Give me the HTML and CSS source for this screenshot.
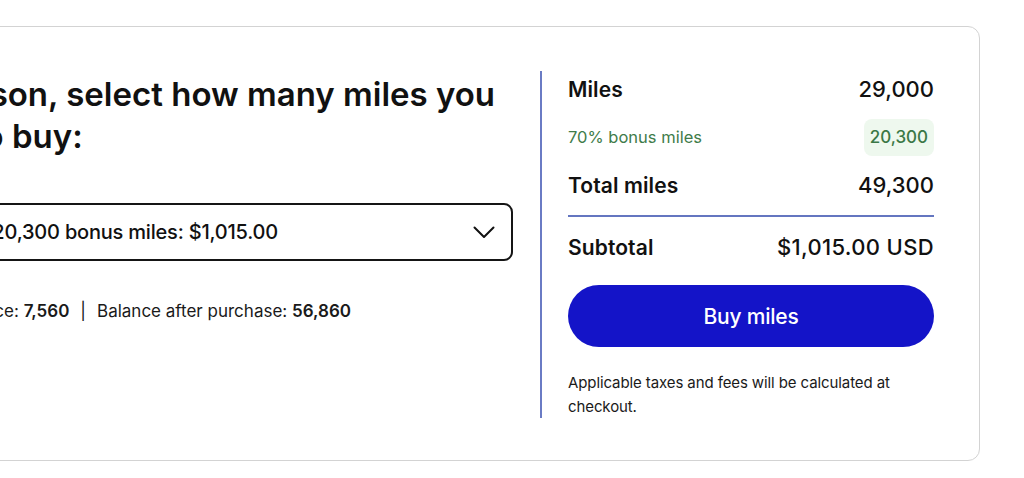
FILE: index.html
```html
<!DOCTYPE html>
<html lang="en">
<head>
<meta charset="utf-8">
<title>Buy miles</title>
<link rel="stylesheet" href="styles.css">
</head>
<body>
<main class="card">
  <section class="picker">
    <h1 class="title">Hi Jason, select how many miles you<br>would like to buy:</h1>
    <div class="select" role="combobox" aria-expanded="false">
      <span class="select-text">29,000 miles + 20,300 bonus miles: $1,015.00</span>
      <svg class="chevron" width="22" height="13" viewBox="0 0 22 13" aria-hidden="true"><polyline points="1.5,1.5 11,11 20.5,1.5" fill="none" stroke="#111" stroke-width="2" stroke-linecap="round" stroke-linejoin="round"/></svg>
    </div>
    <p class="balance">Your current balance: <b>7,560</b><span class="sep">|</span>Balance after purchase: <b>56,860</b></p>
  </section>
  <aside class="summary">
    <div class="row row-main"><span class="label">Miles</span><span class="value">29,000</span></div>
    <div class="row row-bonus"><span class="bonus-label">70% bonus miles</span><span class="badge">20,300</span></div>
    <div class="row row-main"><span class="label">Total miles</span><span class="value">49,300</span></div>
    <hr class="rule">
    <div class="row row-main"><span class="label">Subtotal</span><span class="value value-sub">$1,015.00 USD</span></div>
    <button class="buy" type="button">Buy miles</button>
    <p class="note">Applicable taxes and fees will be calculated at checkout.</p>
  </aside>
</main>
</body>
</html>
```
FILE: styles.css
```css
* { box-sizing: border-box; }
html, body { margin: 0; padding: 0; background: #fff; }
body {
  font-family: "Inter", "Noto Sans", sans-serif;
  color: #111;
  overflow: hidden;
  height: 478px;
}
.card {
  margin: 26px 0 0 -231px;
  width: 1211px;
  height: 435px;
  border: 1px solid #d3d3d3;
  border-radius: 12px;
  padding: 44px 45px 44px 44px;
  display: grid;
  grid-template-columns: 1fr 394px;
  column-gap: 27px;
  background: #fff;
}
.picker { padding-top: 2px; }
.title {
  margin: 0 0 0 -10px;
  font-size: 33px;
  line-height: 42px;
  font-weight: 600;
  letter-spacing: 0;
  text-indent: 106px;
  white-space: nowrap;
}
.select {
  margin-top: 46px;
  height: 58px;
  border: 2px solid #151515;
  border-radius: 9px;
  display: flex;
  align-items: center;
  justify-content: space-between;
  padding: 0 16px 0 16px;
}
.select-text {
  font-size: 20px;
  font-weight: 500;
  letter-spacing: -0.2px;
  text-indent: 15px;
  display: block;
}
.chevron { display: block; flex: none; }
.balance {
  margin: 38px 0 0;
  font-size: 17px;
  line-height: 24px;
  color: #1a1a1a;
  text-indent: 32px;
}
.balance b { font-weight: 600; }
.sep { margin: 0 11px; color: #111; }
.summary {
  border-left: 2px solid #6a7bc4;
  padding-left: 26px;
  display: flex;
  flex-direction: column;
  gap: 12px;
}
.row {
  display: flex;
  justify-content: space-between;
  align-items: center;
  height: 36px;
}
.label { font-size: 21px; font-weight: 600; letter-spacing: 0.1px; }
.value { font-size: 22px; font-weight: 500; letter-spacing: 0; }
.value-sub { letter-spacing: 0.35px; }
.bonus-label { font-size: 16.5px; color: #3f7c4a; }
.badge {
  font-size: 17px;
  font-weight: 500;
  color: #3b7846;
  background: #eef8ee;
  border-radius: 8px;
  height: 37px;
  line-height: 37px;
  padding: 0 6px;
}
.rule {
  margin: 0;
  border: 0;
  height: 2px;
  background: #6476c0;
}
.buy {
  margin-top: 8px;
  height: 62px;
  border: 0;
  border-radius: 31px;
  background: #1414c8;
  color: #fff;
  font-family: inherit;
  font-size: 21px;
  font-weight: 500;
  letter-spacing: -0.2px;
  cursor: pointer;
}
.note {
  margin: 12px 0 0;
  font-size: 15px;
  line-height: 23.5px;
  letter-spacing: -0.1px;
  color: #1a1a1a;
}
```
